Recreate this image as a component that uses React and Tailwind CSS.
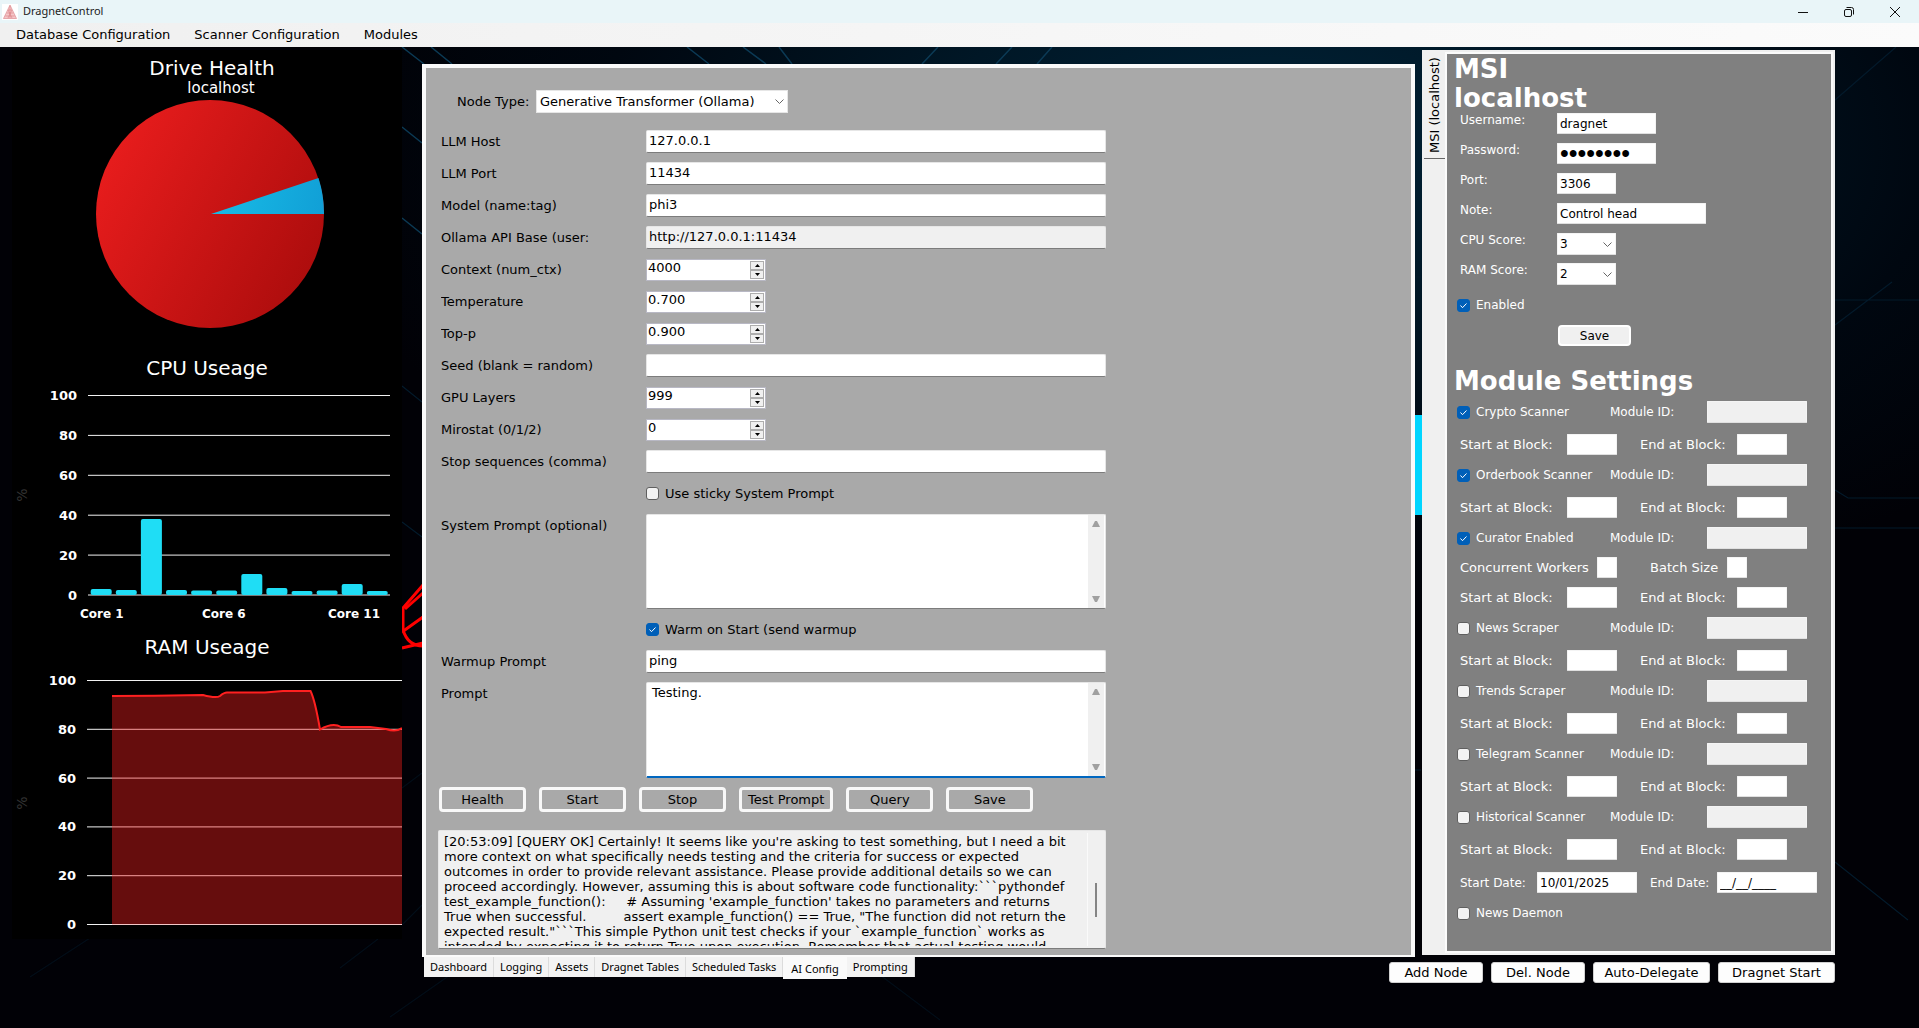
import React from "react";

const TICKS = [100, 80, 60, 40, 20, 0];
const CPU = [3, 2.5, 38, 2.5, 2.3, 2.3, 10.5, 3.5, 2, 2.3, 5.5, 2];

const LOG = `[20:53:09] [QUERY OK] Certainly! It seems like you're asking to test something, but I need a bit
more context on what specifically needs testing and the criteria for success or expected
outcomes in order to provide relevant assistance. Please provide additional details so we can
proceed accordingly. However, assuming this is about software code functionality:\`\`\`pythondef
test_example_function():     # Assuming 'example_function' takes no parameters and returns
True when successful.         assert example_function() == True, "The function did not return the
expected result."\`\`\`This simple Python unit test checks if your \`example_function\` works as
intended by expecting it to return True upon execution. Remember that actual testing would`;

function Backdrop() {
  return (
    <svg
      className="absolute inset-0 h-full w-full"
      viewBox="0 47 1919 981"
      preserveAspectRatio="none"
      aria-hidden="true"
    >
      <defs>
        <radialGradient id="glow" cx="0.66" cy="0.1" r="0.5">
          <stop offset="0" stopColor="#002338" />
          <stop offset="0.35" stopColor="#001726" />
          <stop offset="0.7" stopColor="#000710" />
          <stop offset="1" stopColor="#010106" />
        </radialGradient>
      </defs>
      <rect x="0" y="47" width="1919" height="981" fill="#010106" />
      <rect x="0" y="47" width="1919" height="981" fill="url(#glow)" />
      <g stroke="#0b3a55" strokeWidth="1.5" fill="none">
        <path d="M402 47L424 64M431 47L452 64M687 47L709 64M743 47L766 64M402 127L422 143M402 218L422 234M779 47L792 64" />
        <path d="M938 47L922 64M1052 47L1037 64M1012 47L996 64" />
      </g>
      <g stroke="#031a2b" strokeWidth="1.2" fill="none">
        <path d="M1835 100L1896 47M1835 325L1892 282M1835 300H1919M1835 490L1848 498H1919M1835 528H1919M1835 862L1908 920M402 386L422 402M402 522L422 537" />
        <path d="M1414 277H1421M1414 770H1421" />
      </g>
      <g stroke="#020d18" strokeWidth="1.2" fill="none">
        <path d="M30 977L90 938M340 968L378 939M390 1017L450 975M402 788L422 773M402 925L422 905M880 975L940 1020" />
      </g>
      <g stroke="#ff0000" strokeWidth="3" fill="none">
        <path d="M423 585L403 608V630Q408 646 423 646" />
        <path d="M423 593L405 609M402 632L423 617M402 648L423 643" />
      </g>
      <rect x="1406" y="415" width="22" height="100" fill="#00d5ff" />
    </svg>
  );
}

function TitleBar() {
  return (
    <header className="flex h-[23px] items-center bg-[#e9f5f8] pl-[2px] font-['Noto_Sans',sans-serif]">
      <svg className="h-4 w-4" viewBox="0 0 16 16" aria-hidden="true">
        <rect width="16" height="16" fill="#fff" />
        <path d="M8 1L1.5 14.500H14.500Z" fill="#f5c6c8" />
        <path
          d="M8 1L1.500 14.500H14.500L8 1M6 6h4M4.800 9h6.400M3.300 12h9.400M8 2v12M6 6l4 8M10 6l-4 8"
          stroke="#d98084"
          strokeWidth="0.600"
          fill="none"
        />
      </svg>
      <span className="ml-[5px] text-[11px] text-[#222]">DragnetControl</span>
      <div className="ml-auto flex gap-[21px] pr-3">
        <button type="button" aria-label="Minimize" className="flex h-5 w-[25px] items-center justify-center">
          <svg className="h-3 w-3" viewBox="0 0 12 12" stroke="#111" fill="none"><path d="M1 6.500H11" /></svg>
        </button>
        <button type="button" aria-label="Restore" className="flex h-5 w-[25px] items-center justify-center">
          <svg className="h-3 w-3" viewBox="0 0 12 12" stroke="#111" fill="none">
            <rect x="1.500" y="3.500" width="7" height="7" rx="1.500" />
            <path d="M3.500 1.500H8.500Q10.500 1.500 10.500 3.500V8.500" />
          </svg>
        </button>
        <button type="button" aria-label="Close" className="flex h-5 w-[25px] items-center justify-center">
          <svg className="h-3 w-3" viewBox="0 0 12 12" stroke="#111" fill="none"><path d="M1 1L11 11M11 1L1 11" /></svg>
        </button>
      </div>
    </header>
  );
}

function MenuBar() {
  return (
    <nav className="flex h-6 items-center gap-6 bg-linear-to-r from-[#f0f0f0] to-[#fbfbfb] pl-4 text-[13px] text-black">
      <button type="button">Database Configuration</button>
      <button type="button">Scanner Configuration</button>
      <button type="button">Modules</button>
    </nav>
  );
}

function Charts() {
  return (
    <aside className="mt-[3px] ml-3 w-[390px] shrink-0 self-start bg-black text-white">
      <h2 className="pt-[6px] pl-[10px] text-center text-xl leading-6">Drive Health</h2>
      <p className="pl-7 text-center text-[15px] leading-4">localhost</p>
      <svg className="block w-full" viewBox="12 96 390 260" role="img" aria-label="Drive health">
        <defs>
          <linearGradient id="used" gradientUnits="userSpaceOnUse" x1="110" y1="160" x2="310" y2="270">
            <stop offset="0" stopColor="#e61c1c" />
            <stop offset="1" stopColor="#ae0d0d" />
          </linearGradient>
          <linearGradient id="free" gradientUnits="userSpaceOnUse" x1="210" y1="200" x2="324" y2="220">
            <stop offset="0" stopColor="#18bce6" />
            <stop offset="1" stopColor="#119fd6" />
          </linearGradient>
        </defs>
        <circle cx="210" cy="214" r="114" fill="url(#used)" />
        <path d="M211 214L318.500 178A114 114 0 0 1 324 214Z" fill="url(#free)" />
      </svg>

      <h2 className="text-center text-xl leading-6">CPU Useage</h2>
      <svg className="block w-full font-bold" viewBox="12 380 390 255" role="img" aria-label="CPU usage per core">
        {TICKS.map((t, i) => (
          <g key={t}>
            <path d={`M88 ${395.5 + i * 39.9}H390`} stroke="#f2f2f2" />
            <text x="77" y={400 + i * 39.9} textAnchor="end" fontSize="13" fill="#fff">{t}</text>
          </g>
        ))}
        {CPU.map((v, i) => (
          <rect key={i} x={90.7 + i * 25.1} y={595 - v * 2} width="21" height={v * 2} rx="2" fill="#1fddf5" />
        ))}
        <g fontSize="12" fill="#fff">
          <text x="80" y="618">Core 1</text>
          <text x="202" y="618">Core 6</text>
          <text x="328" y="618">Core 11</text>
        </g>
        <text x="22" y="495" fontSize="14" fontWeight="400" fill="#333" textAnchor="middle" dominantBaseline="central" transform="rotate(-90 22 495)">%</text>
      </svg>

      <h2 className="text-center text-xl leading-6">RAM Useage</h2>
      <svg className="block w-full font-bold" viewBox="12 659 390 280" role="img" aria-label="RAM usage">
        {TICKS.map((t, i) => (
          <g key={t}>
            <path d={`M87 ${680.5 + i * 48.8}H402`} stroke="#f2f2f2" />
            <text x="76" y={685 + i * 48.8} textAnchor="end" fontSize="13" fill="#fff">{t}</text>
          </g>
        ))}
        <path
          d="M112 696L155 695.700L203 695Q216 698.500 220 696Q224 692.500 227 692.500H265L283 691H310.500Q315 700 320 729.500Q333 722 341 727H370L386 729Q396 732.500 402 728V924.500H112Z"
          fill="#ff2020"
          fillOpacity="0.4"
        />
        <path
          d="M112 696L155 695.700L203 695Q216 698.500 220 696Q224 692.500 227 692.500H265L283 691H310.500Q315 700 320 729.500Q333 722 341 727H370L386 729Q396 732.500 402 728"
          fill="none"
          stroke="#ff2020"
          strokeWidth="2"
        />
        <text x="22" y="803" fontSize="14" fontWeight="400" fill="#333" textAnchor="middle" dominantBaseline="central" transform="rotate(-90 22 803)">%</text>
      </svg>
    </aside>
  );
}

const fieldCls =
  "h-[23px] w-full rounded-[2px] border-x border-t border-b border-x-[#e6e6e6] border-t-[#e6e6e6] border-b-[#7c7c7c] bg-white px-[2px] pb-[2px] text-[13px] text-black outline-none";

function Row({ id, label, tall, children }) {
  return (
    <div className={tall ? "flex items-start" : "flex h-[23px] items-center"}>
      <label htmlFor={id} className="w-[205px] shrink-0 overflow-hidden text-[13px] leading-[23px] whitespace-nowrap">
        {label}
      </label>
      <div className="w-[460px]">{children}</div>
    </div>
  );
}

function TextRow({ id, label, value, readOnly }) {
  return (
    <Row id={id} label={label}>
      <input
        id={id}
        type="text"
        defaultValue={value}
        readOnly={readOnly}
        className={readOnly ? `${fieldCls} bg-[#f0f0f0]!` : fieldCls}
      />
    </Row>
  );
}

function SpinRow({ id, label, value }) {
  const btn = "flex h-[9px] w-[14px] items-center justify-center border border-[#adadad] bg-[#f0f0f0]";
  return (
    <Row id={id} label={label}>
      <div className="flex h-[22px] w-[120px] items-center border border-[#b8b8c4] bg-white pr-px">
        <input id={id} type="text" defaultValue={value} className="h-5 min-w-0 flex-1 pb-1 pl-px text-[13px] outline-none" />
        <div className="flex flex-col">
          <button type="button" aria-label={`Increase ${label}`} className={btn}>
            <svg className="h-[3px] w-[5px]" viewBox="0 0 5 3"><path d="M0 3L2.500 0L5 3Z" /></svg>
          </button>
          <button type="button" aria-label={`Decrease ${label}`} className={btn}>
            <svg className="h-[3px] w-[5px]" viewBox="0 0 5 3"><path d="M0 0L2.500 3L5 0Z" /></svg>
          </button>
        </div>
      </div>
    </Row>
  );
}

function Check({ id, label, checked }) {
  return (
    <label htmlFor={id} className="flex items-center gap-[6px] whitespace-nowrap">
      <span className="relative flex h-[13px] w-[13px]">
        <input
          id={id}
          type="checkbox"
          defaultChecked={checked}
          className="peer h-[13px] w-[13px] appearance-none rounded-[3px] border border-[#5f5f5f] bg-[#f3f3f3] checked:border-[#005fb8] checked:bg-[#005fb8]"
        />
        <svg
          className="pointer-events-none absolute inset-0 hidden h-[13px] w-[13px] peer-checked:block"
          viewBox="0 0 13 13"
          fill="none"
          stroke="#fff"
        >
          <path d="M3.500 6.500L5.500 8.700L9.500 4.500" />
        </svg>
      </span>
      {label}
    </label>
  );
}

function Area({ id, value, focused }) {
  return (
    <div
      className={
        focused
          ? "flex h-24 rounded-[2px] border-x border-t border-b-2 border-[#e6e6e6] border-b-[#0067c0] bg-white pr-px"
          : "flex h-[95px] rounded-[2px] border border-[#e6e6e6] border-b-[#7c7c7c] bg-white pr-px"
      }
    >
      <textarea
        id={id}
        defaultValue={value}
        autoFocus={focused}
        onFocus={(e) => e.target.setSelectionRange(e.target.value.length, e.target.value.length)}
        className="min-w-0 flex-1 resize-none overflow-hidden px-[5px] pt-[2px] text-[13px] leading-4 outline-none"
      />
      <div className="flex w-4 flex-col items-center justify-between bg-[#f0f0f0] py-[6px]">
        <svg className="h-[6px] w-2" viewBox="0 0 8 6"><path d="M0 6L3 0H5L8 6Z" fill="#a0a0a0" /></svg>
        <svg className="h-[6px] w-2" viewBox="0 0 8 6"><path d="M0 0L3 6H5L8 0Z" fill="#a0a0a0" /></svg>
      </div>
    </div>
  );
}

function Chevron() {
  return (
    <svg
      className="pointer-events-none absolute inset-y-0 right-1 my-auto h-[9px] w-[9px]"
      viewBox="0 0 9 9"
      fill="none"
      stroke="#666"
    >
      <path d="M0.500 2.500L4.500 6.500L8.500 2.500" />
    </svg>
  );
}

function Editor() {
  const actions = ["Health", "Start", "Stop", "Test Prompt", "Query", "Save"];
  return (
    <main className="mt-[17px] flex-1 border-4 border-b-2 border-[#fafafa] bg-[#a9a9a9] pt-[22px] pb-[6px] pl-[12px] text-[13px] text-black">
      <div className="flex items-center pl-[19px]">
        <label htmlFor="nodeType" className="w-[79px] whitespace-nowrap">Node Type:</label>
        <div className="relative">
          <select
            id="nodeType"
            className="block h-[23px] w-[252px] appearance-none border border-[#e6e6e6] bg-white px-[3px] text-[13px] leading-5 outline-none"
          >
            <option>Generative Transformer (Ollama)</option>
          </select>
          <Chevron />
        </div>
      </div>

      <form className="mt-[17px] flex flex-col gap-[9px] pl-[3px]" onSubmit={(e) => e.preventDefault()}>
        <TextRow id="host" label="LLM Host" value="127.0.0.1" />
        <TextRow id="port" label="LLM Port" value="11434" />
        <TextRow id="model" label="Model (name:tag)" value="phi3" />
        <TextRow id="api" label="Ollama API Base (user:" value="http://127.0.0.1:11434" readOnly />
        <SpinRow id="ctx" label="Context (num_ctx)" value="4000" />
        <SpinRow id="temp" label="Temperature" value="0.700" />
        <SpinRow id="topp" label="Top-p" value="0.900" />
        <TextRow id="seed" label="Seed (blank = random)" value="" />
        <SpinRow id="gpu" label="GPU Layers" value="999" />
        <SpinRow id="miro" label="Mirostat (0/1/2)" value="0" />
        <TextRow id="stopseq" label="Stop sequences (comma)" value="" />
        <div className="flex h-[23px] items-center pl-[205px]">
          <Check id="sticky" label="Use sticky System Prompt" />
        </div>
        <Row id="sys" label="System Prompt (optional)" tall>
          <Area id="sys" value="" />
        </Row>
        <div className="flex h-[23px] items-center pl-[205px]">
          <Check id="warm" label="Warm on Start (send warmup" checked />
        </div>
        <TextRow id="warmup" label="Warmup Prompt" value="ping" />
        <Row id="prompt" label="Prompt" tall>
          <Area id="prompt" value="Testing." focused />
        </Row>
      </form>

      <div className="mt-[9px] flex gap-[13px] pl-px">
        {actions.map((a) => (
          <button
            key={a}
            type="button"
            className="h-[25px] min-w-[87px] rounded-[4px] border-[3px] border-[#f8f8f8] px-[6px] whitespace-nowrap"
          >
            {a}
          </button>
        ))}
      </div>

      <div className="mt-[18px] flex h-[119px] w-[668px] rounded-[2px] border border-[#e6e6e6] border-b-[#7c7c7c] bg-[#f0f0f0] py-[2px] pr-px">
        <pre className="min-w-0 flex-1 overflow-hidden pt-px pl-[5px] font-[inherit] text-[13px] leading-[15px]">{LOG}</pre>
        <div className="flex w-[17px] justify-center border-l border-[#fafafa] pt-[50px]">
          <div className="h-[34px] w-[2px] bg-[#858585]" />
        </div>
      </div>
    </main>
  );
}

const smallCls =
  "h-[21px] rounded-[1px] border border-[#f4f4f4] border-b-[#e0e0e0] bg-white px-[2px] text-xs text-black outline-none";

function NodeField({ id, label, children }) {
  return (
    <div className="flex h-[30px] items-start pl-[13px]">
      <label htmlFor={id} className="w-[97px] leading-[14px]">{label}</label>
      {children}
    </div>
  );
}

function ScoreSelect({ id, value }) {
  return (
    <div className="relative">
      <select id={id} defaultValue={value} className={`${smallCls} block h-[22px]! w-[59px] appearance-none`}>
        <option>1</option>
        <option>2</option>
        <option>3</option>
      </select>
      <Chevron />
    </div>
  );
}

function ModuleRow({ id, label, checked }) {
  return (
    <div className="flex h-[22px] items-center pl-[10px]">
      <div className="w-[153px]"><Check id={id} label={label} checked={checked} /></div>
      <label htmlFor={`${id}-id`} className="w-[97px]">Module ID:</label>
      <input id={`${id}-id`} type="text" readOnly className={`${smallCls} h-[22px]! w-[100px] bg-[#f0f0f0]!`} />
    </div>
  );
}

function BlockRow({ id }) {
  return (
    <div className="mb-[9px] flex h-[21px] items-center pl-[13px] text-[13px]">
      <label htmlFor={`${id}-start`} className="w-[107px]">Start at Block:</label>
      <input id={`${id}-start`} type="text" className={`${smallCls} w-[50px]`} />
      <label htmlFor={`${id}-end`} className="ml-[23px] w-[97px]">End at Block:</label>
      <input id={`${id}-end`} type="text" className={`${smallCls} w-[50px]`} />
    </div>
  );
}

function Module({ id, label, checked, workers }) {
  return (
    <>
      <ModuleRow id={id} label={label} checked={checked} />
      {workers && (
        <div className="mt-2 -mb-[2px] flex h-[21px] items-center pl-[13px] text-[13px] whitespace-nowrap">
          <label htmlFor="workers" className="w-[137px]">Concurrent Workers</label>
          <input id="workers" type="text" className={`${smallCls} w-5`} />
          <label htmlFor="batch" className="ml-[33px] w-[77px]">Batch Size</label>
          <input id="batch" type="text" className={`${smallCls} w-5`} />
        </div>
      )}
      <div className="h-[11px]" />
      <BlockRow id={id} />
    </>
  );
}

function NodePanel() {
  return (
    <aside className="mt-[3px] mb-[2px] ml-[7px] flex w-[413px] shrink-0 border-2 border-[#f0f0f0] bg-[#f0f0f0] text-xs">
      <div className="w-[21px] shrink-0">
        <button
          type="button"
          className="flex h-[107px] w-[21px] rotate-180 items-center justify-center border-t border-[#666] text-[13px] whitespace-nowrap text-black [writing-mode:vertical-rl]"
        >
          MSI (localhost)
        </button>
      </div>
      <section className="min-w-0 flex-1 border-2 border-[#fbfbfb] bg-[#808080] text-white">
        <h1 className="pt-px pl-[7px] text-[26px] leading-[29px] font-bold">MSI<br />localhost</h1>
        <NodeField id="user" label="Username:">
          <input id="user" type="text" defaultValue="dragnet" className={`${smallCls} w-[99px]`} />
        </NodeField>
        <NodeField id="pass" label="Password:">
          <input
            id="pass"
            type="password"
            defaultValue="password"
            className={`${smallCls} w-[99px] font-['Liberation_Sans',sans-serif] text-[25px]!`}
          />
        </NodeField>
        <NodeField id="nport" label="Port:">
          <input id="nport" type="text" defaultValue="3306" className={`${smallCls} w-[59px]`} />
        </NodeField>
        <NodeField id="note" label="Note:">
          <input id="note" type="text" defaultValue="Control head" className={`${smallCls} w-[149px]`} />
        </NodeField>
        <NodeField id="cpu" label="CPU Score:"><ScoreSelect id="cpu" value="3" /></NodeField>
        <NodeField id="ram" label="RAM Score:"><ScoreSelect id="ram" value="2" /></NodeField>
        <div className="flex h-6 items-center pl-[10px]">
          <Check id="enabled" label="Enabled" checked />
        </div>
        <button
          type="button"
          className="mt-2 ml-[111px] block h-[21px] w-[73px] rounded-[4px] border-2 border-white bg-[#f0f0f0] leading-4 text-black"
        >
          Save
        </button>
        <h2 className="mt-5 mb-[5px] pl-[7px] text-[26px] leading-[30px] font-bold whitespace-nowrap">Module Settings</h2>
        <Module id="crypto" label="Crypto Scanner" checked />
        <Module id="orderbook" label="Orderbook Scanner" checked />
        <Module id="curator" label="Curator Enabled" checked workers />
        <Module id="news" label="News Scraper" />
        <Module id="trends" label="Trends Scraper" />
        <Module id="telegram" label="Telegram Scanner" />
        <Module id="historical" label="Historical Scanner" />
        <div className="mt-3 flex h-[21px] items-center pl-[13px]">
          <label htmlFor="sdate" className="w-[77px]">Start Date:</label>
          <input id="sdate" type="text" defaultValue="10/01/2025" className={`${smallCls} w-[100px]`} />
          <label htmlFor="edate" className="ml-[13px] w-[67px]">End Date:</label>
          <input id="edate" type="text" defaultValue="__/__/____" className={`${smallCls} w-[100px]`} />
        </div>
        <div className="mt-[9px] flex h-[22px] items-center pl-[10px]">
          <Check id="daemon" label="News Daemon" />
        </div>
      </section>
    </aside>
  );
}

function Footer() {
  const tabs = ["Dashboard", "Logging", "Assets", "Dragnet Tables", "Scheduled Tasks", "AI Config", "Prompting"];
  const cls = "h-[21px] rounded-[3px] border border-[#d0d0d0] bg-[#fdfdfd] text-[13px] leading-[18px] whitespace-nowrap text-black";
  return (
    <div className="flex items-start justify-between pl-[2px]">
      <div className="flex items-start font-['Noto_Sans',sans-serif] text-[11px] text-black">
        {tabs.map((t) => (
          <button
            key={t}
            type="button"
            className={
              t === "AI Config"
                ? "h-[22px] bg-[#fafafa] px-2 pt-[2px] leading-5 whitespace-nowrap"
                : "h-5 border-r border-[#dcdcdc] bg-[#f3f3f3] px-[6px] leading-5 whitespace-nowrap"
            }
          >
            {t}
          </button>
        ))}
      </div>
      <div className="flex gap-2 pt-[5px]">
        <button type="button" className={`${cls} w-[94px]`}>Add Node</button>
        <button type="button" className={`${cls} w-[94px]`}>Del. Node</button>
        <button type="button" className={`${cls} w-[117px]`}>Auto-Delegate</button>
        <button type="button" className={`${cls} w-[117px]`}>Dragnet Start</button>
      </div>
    </div>
  );
}

export default function App() {
  return (
    <div className="flex min-h-screen flex-col font-['DejaVu_Sans',sans-serif]">
      <TitleBar />
      <MenuBar />
      <div className="relative flex-1 overflow-hidden bg-[#010106]">
        <Backdrop />
        <div className="relative flex">
          <Charts />
          <div className="mr-[84px] ml-5 flex min-w-0 flex-1 flex-col">
            <div className="flex">
              <Editor />
              <NodePanel />
            </div>
            <Footer />
          </div>
        </div>
      </div>
    </div>
  );
}
